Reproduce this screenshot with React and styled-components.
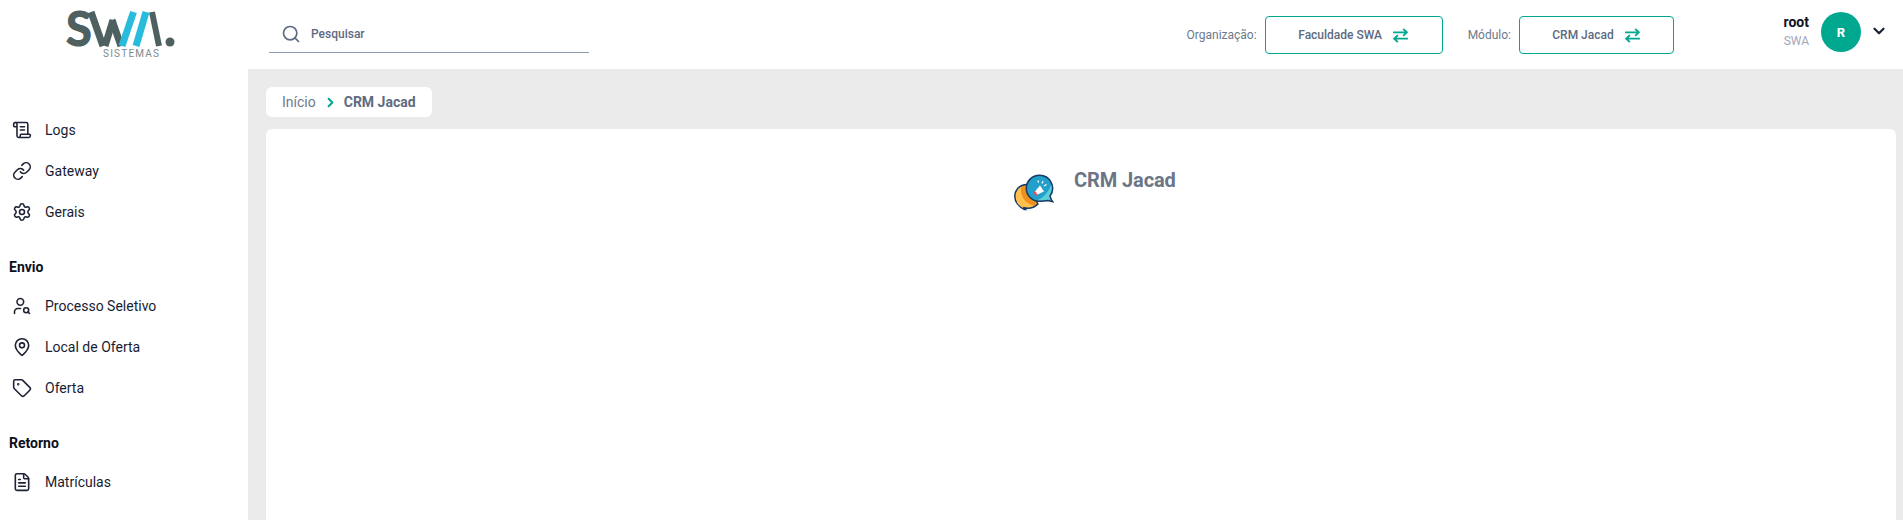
import React from 'react';
import styled, { createGlobalStyle } from 'styled-components';
import { Search, ChevronDown, ChevronRight, Link, Settings, MapPin, Tag, ScrollText, UserSearch, FileText } from 'lucide-react';

const GlobalStyle = createGlobalStyle`
  html, body { margin: 0; padding: 0; height: 100%; overflow: hidden; }
  body { font-family: Roboto, "Liberation Sans", sans-serif; background: #ebebeb; }
  * { box-sizing: border-box; }
`;

const Logo = () => (
  <LogoSvg viewBox="0 0 120 60" width="120" height="60">
    <text x="0" y="46" fontFamily="Lato, sans-serif" fontWeight="700" fontSize="47" fill="#4f6061" stroke="#4f6061" strokeWidth="1.2">S</text>
    <g strokeWidth="7">
      <line x1="25" y1="12" x2="37" y2="46" stroke="#4f6061" />
      <line x1="39" y1="46" x2="47" y2="20" stroke="#4f6061" />
      <line x1="46" y1="20" x2="55" y2="46" stroke="#4f6061" />
      <line x1="86" y1="12" x2="93" y2="46" stroke="#4f6061" strokeWidth="6" />
      <line x1="67.5" y1="12" x2="56" y2="46" stroke="#29bbdc" />
      <line x1="80" y1="12" x2="70" y2="46" stroke="#29bbdc" />
    </g>
    <circle cx="104" cy="42" r="4.5" fill="#4f6061" />
    <text x="37" y="57" fontFamily="Roboto, sans-serif" fontSize="10" fill="#7c8a8b" textLength="56">SISTEMAS</text>
  </LogoSvg>
);

const SwapIcon = () => (
  <svg width="17" height="15" viewBox="0 0 16 14" fill="none" stroke="#00a88f" strokeWidth="1.7">
    <path d="M1 4 H14 M10.5 .8 L14 4 L10.5 7.2" />
    <path d="M15 10 H2 M5.5 6.8 L2 10 L5.5 13.2" />
  </svg>
);

const orangeBubble = 'M13 10.5 C5 10.5 .8 16.5 .8 22.5 C.8 28 5 33 10.5 35.5 L11.5 35.5 C10.5 34.7 10 34 10 33.8 C15 35 20 34 24 30 Z';
const blueBubble = 'M25.3 1.3 A13 13 0 1 0 25.3 27.3 C29 27.3 32 27 34 26.5 L38.7 27.7 C37 26 36.5 24 36 22 A13 13 0 0 0 25.3 1.3 Z';

const ChatIcon = () => (
  <svg width="40" height="37" viewBox="0 0 40 37">
    <defs>
      <clipPath id="orangeClip"><path d={orangeBubble} /></clipPath>
      <clipPath id="blueClip"><path d={blueBubble} /></clipPath>
    </defs>
    <path d={orangeBubble} fill="#ffc04d" />
    <circle cx="23" cy="16" r="16" fill="#f0901e" clipPath="url(#orangeClip)" />
    <path d={orangeBubble} fill="none" stroke="#173a66" strokeWidth="1.5" />
    <path d={blueBubble} fill="#22a0cb" />
    <circle cx="14" cy="4" r="30" fill="none" stroke="#5cd0d8" strokeWidth="12" clipPath="url(#blueClip)" />
    <path d={blueBubble} fill="none" stroke="#173a66" strokeWidth="1.5" />
    <path d="M20.5 18 L26 11.5 L30 17.5 L22.5 21 Z" fill="#fff" />
    <path d="M19.5 18.5 L22 22 L23.5 20.5 L21 17 Z" fill="#e5486b" />
    <path d="M29 7 l-1 2.5 M32.5 10.5 l-2.5 1.5 M24 6.5 l.5 2" stroke="#fff" strokeWidth="1.2" />
  </svg>
);

const menu = [
  { items: [['Logs', ScrollText], ['Gateway', Link], ['Gerais', Settings]] },
  { title: 'Envio', items: [['Processo Seletivo', UserSearch], ['Local de Oferta', MapPin], ['Oferta', Tag]] },
  { title: 'Retorno', items: [['Matrículas', FileText]] },
];

const App = () => (
  <Page>
    <GlobalStyle />
    <Header>
      <LogoArea><Logo /></LogoArea>
      <SearchBox>
        <Search size={20} color="#5c6b7f" strokeWidth={2} />
        <span>Pesquisar</span>
      </SearchBox>
      <Selectors>
        <SelectorLabel>Organização:</SelectorLabel>
        <SelectorButton $width={178}>
          Faculdade SWA <SwapIcon />
        </SelectorButton>
        <SelectorLabel $gap={25}>Módulo:</SelectorLabel>
        <SelectorButton $width={155}>
          CRM Jacad <SwapIcon />
        </SelectorButton>
      </Selectors>
      <UserArea>
        <UserText>
          <UserName>root</UserName>
          <UserOrg>SWA</UserOrg>
        </UserText>
        <Avatar>R</Avatar>
        <ChevronDown size={18} color="#1e2235" strokeWidth={3} />
      </UserArea>
    </Header>
    <Body>
      <Sidebar>
        {menu.map((group, i) => (
          <Group key={i}>
            {group.title && <GroupTitle>{group.title}</GroupTitle>}
            {group.items.map(([label, Icon]) => (
              <MenuItem key={label}>
                <IconSlot><Icon size={20} strokeWidth={1.9} color="#1e2235" /></IconSlot>
                {label}
              </MenuItem>
            ))}
          </Group>
        ))}
      </Sidebar>
      <Content>
        <Breadcrumb>
          <CrumbLink>Início</CrumbLink>
          <ChevronRight size={15} color="#00a88f" strokeWidth={3.2} />
          <CrumbCurrent>CRM Jacad</CrumbCurrent>
        </Breadcrumb>
        <Card>
          <CardHeading>
            <ChatIcon />
            <CardTitle>CRM Jacad</CardTitle>
          </CardHeading>
        </Card>
      </Content>
    </Body>
  </Page>
);

const Page = styled.div`
  height: 520px;
  display: flex;
  flex-direction: column;
  overflow: hidden;
`;

const Header = styled.header`
  height: 69px;
  flex: none;
  background: #fff;
  display: flex;
  align-items: flex-start;
`;

const LogoArea = styled.div`
  width: 269px;
  padding: 0 0 0 66px;
`;

const LogoSvg = styled.svg`
  display: block;
`;

const SearchBox = styled.div`
  width: 320px;
  height: 53px;
  padding: 16px 0 0 12px;
  display: flex;
  align-items: center;
  gap: 10px;
  border-bottom: 1px solid #8a9ab5;
  color: #5c6b7f;
  font-size: 12px;
  font-weight: 500;
`;

const Selectors = styled.div`
  margin-left: auto;
  margin-top: 16px;
  display: flex;
  align-items: center;
`;

const SelectorLabel = styled.span`
  margin-left: ${(p) => p.$gap || 0}px;
  margin-right: 8px;
  font-size: 12px;
  color: #6c7a8c;
`;

const SelectorButton = styled.div`
  width: ${(p) => p.$width}px;
  height: 38px;
  border: 1px solid #00a88f;
  border-radius: 4px;
  display: flex;
  align-items: center;
  justify-content: center;
  gap: 10px;
  font-size: 12px;
  font-weight: 500;
  color: #5c6b7f;
`;

const UserArea = styled.div`
  width: 229px;
  padding: 12px 15px 0 0;
  display: flex;
  align-items: flex-start;
  justify-content: flex-end;

  > svg { margin: 10px 0 0 9px; }
`;

const UserText = styled.div`
  display: flex;
  flex-direction: column;
  align-items: flex-end;
  margin-right: 12px;
`;

const UserName = styled.span`
  font-size: 14px;
  font-weight: 700;
  line-height: 20px;
  color: #0f1222;
`;

const UserOrg = styled.span`
  font-size: 12px;
  line-height: 18px;
  color: #a1a5b7;
`;

const Avatar = styled.div`
  width: 40px;
  height: 40px;
  border-radius: 50%;
  background: #00a88f;
  color: #fff;
  font-size: 13px;
  font-weight: 700;
  display: flex;
  align-items: center;
  justify-content: center;
`;

const Body = styled.div`
  flex: 1;
  display: flex;
  min-height: 0;
`;

const Sidebar = styled.nav`
  width: 248px;
  flex: none;
  background: #fff;
  padding-top: 40px;
`;

const Group = styled.div`
  margin-bottom: 25px;
`;

const GroupTitle = styled.div`
  padding-left: 9px;
  height: 20px;
  line-height: 20px;
  margin-bottom: 8px;
  font-size: 14px;
  font-weight: 700;
  color: #0d0f1a;
`;

const MenuItem = styled.div`
  height: 41px;
  display: flex;
  align-items: center;
  font-size: 14px;
  color: #181c32;
`;

const IconSlot = styled.span`
  width: 45px;
  padding-left: 12px;
  display: flex;
`;

const Content = styled.main`
  flex: 1;
  min-width: 0;
  padding: 18px 7px 0 18px;
`;

const Breadcrumb = styled.div`
  width: 166px;
  height: 30px;
  padding-left: 16px;
  background: #fff;
  border-radius: 6px;
  display: flex;
  align-items: center;
  gap: 7px;
  font-size: 14px;
`;

const CrumbLink = styled.span`
  color: #6c7a8c;
`;

const CrumbCurrent = styled.span`
  color: #5e6b7e;
  font-weight: 700;
  margin-left: -1px;
`;

const Card = styled.section`
  margin-top: 12px;
  height: 500px;
  background: #fff;
  border-radius: 6px;
  padding-top: 45px;
`;

const CardHeading = styled.div`
  margin-left: 748px;
  display: flex;
  align-items: flex-start;
  gap: 20px;
`;

const CardTitle = styled.h2`
  margin: -6px 0 0;
  font-size: 20px;
  font-weight: 700;
  letter-spacing: -0.1px;
  color: #6b7585;
`;

export default App;
